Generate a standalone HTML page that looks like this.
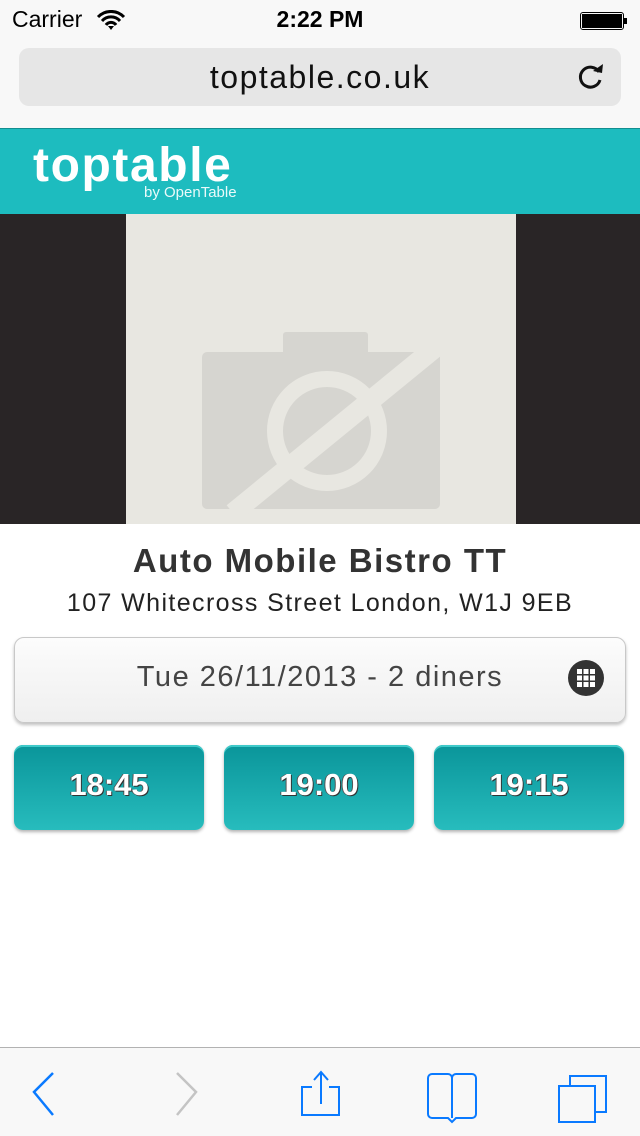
<!DOCTYPE html>
<html><head><meta charset="utf-8"><style>
*{margin:0;padding:0;box-sizing:border-box}
body{width:640px;height:1136px;position:relative;background:#fff;font-family:"Liberation Sans",Arial,sans-serif;overflow:hidden}
.a{position:absolute}
.tb{position:absolute;top:745px;width:190px;height:85px;border-radius:9px;background:linear-gradient(#0a959a,#27bcbd);box-shadow:0 2px 3px rgba(0,0,0,.3),inset 0 2px 0 #3fc9c9;color:#fff;font-weight:bold;font-size:31px;text-align:center;line-height:80px;text-shadow:1px 1px 0 #333,-1px 0 0 #555}
</style></head><body>
<div class="a" style="left:0;top:0;width:640px;height:128px;background:#f8f8f8"></div>
<div class="a" style="left:12px;top:6px;font-size:23px;color:#000">Carrier</div>
<svg class="a" style="left:96px;top:10px" width="30" height="20" viewBox="0 0 30 20"><path d="M2 7a18 18 0 0 1 26 0M6 11a12 12 0 0 1 18 0M10 15a6 6 0 0 1 10 0" stroke="#000" stroke-width="3" fill="none"/><path d="M12 16l3 4 3-4z" fill="#000"/></svg>
<div class="a" style="left:0;width:640px;top:6px;text-align:center;font-size:23px;font-weight:bold">2:22 PM</div>
<div class="a" style="left:580px;top:12px;width:50px"><div style="width:44px;height:18px;border:1.5px solid #000;border-radius:3px;padding:1px;float:left"><div style="background:#000;width:100%;height:100%"></div></div><div style="float:left;width:3px;height:6px;background:#000;margin-top:6px"></div></div>
<div class="a" style="left:19px;top:48px;width:602px;height:58px;background:#e6e6e6;border-radius:10px"></div>
<div class="a" style="left:0;width:640px;top:59px;text-align:center;font-size:32px;color:#111;letter-spacing:1.5px">toptable.co.uk</div>
<svg class="a" style="left:575px;top:60px" width="32" height="32" viewBox="0 0 32 32"><path d="M24 12A10 10 0 1 0 25 20" stroke="#111" stroke-width="3" fill="none"/><path d="M18 11l9 2 1-9z" fill="#111"/></svg>
<div class="a" style="left:0;top:128px;width:640px;height:86px;background:#1dbcbf;border-top:1px solid #128e90"></div>
<div class="a" style="left:33px;top:138px;font-size:48px;font-weight:bold;color:#fff;letter-spacing:1.6px">toptable</div>
<div class="a" style="left:144px;top:184px;font-size:15px;color:#eafafa">by OpenTable</div>
<div class="a" style="left:0;top:214px;width:640px;height:310px;background:#292526"></div>
<div class="a" style="left:126px;top:214px;width:390px;height:310px;background:#e8e7e1"></div>
<svg class="a" style="left:126px;top:214px" width="390" height="310" viewBox="126 214 390 310">
<rect x="202" y="352" width="238" height="157" rx="5" fill="#d6d5d0"/>
<rect x="283" y="332" width="85" height="24" rx="3" fill="#d6d5d0"/>
<circle cx="327" cy="431" r="52" stroke="#e8e7e1" stroke-width="16" fill="none"/>
<path d="M233 513L436 347" stroke="#e8e7e1" stroke-width="20"/>
</svg>
<div class="a" style="left:0;width:640px;top:542px;text-align:center;font-size:33px;font-weight:bold;color:#333;letter-spacing:1.5px">Auto Mobile Bistro TT</div>
<div class="a" style="left:0;width:640px;top:589px;text-align:center;font-size:25px;color:#222;letter-spacing:1.4px">107 Whitecross Street London, W1J 9EB</div>
<div class="a" style="left:14px;top:637px;width:612px;height:86px;border:1px solid #c8c8c8;border-radius:10px;background:linear-gradient(#fcfcfc,#efefef);box-shadow:0 2px 3px rgba(0,0,0,.25)"></div>
<div class="a" style="left:0;width:640px;top:661px;text-align:center;font-size:29px;color:#444;letter-spacing:1.5px">Tue 26/11/2013 - 2 diners</div>
<div class="a" style="left:568px;top:660px;width:36px;height:36px;border-radius:50%;background:#333"></div>
<svg class="a" style="left:576px;top:668px" width="20" height="20" viewBox="0 0 20 20" fill="#fff"><rect x="1" y="1" width="5" height="5"/><rect x="7.5" y="1" width="5" height="5"/><rect x="14" y="1" width="5" height="5"/><rect x="1" y="7.5" width="5" height="5"/><rect x="7.5" y="7.5" width="5" height="5"/><rect x="14" y="7.5" width="5" height="5"/><rect x="1" y="14" width="5" height="5"/><rect x="7.5" y="14" width="5" height="5"/><rect x="14" y="14" width="5" height="5"/></svg>
<div class="tb" style="left:14px">18:45</div>
<div class="tb" style="left:224px">19:00</div>
<div class="tb" style="left:434px">19:15</div>
<div class="a" style="left:0;top:1047px;width:640px;height:89px;background:#f8f8f8;border-top:1px solid #b2b2b2"></div>
<svg class="a" style="left:0;top:1048px" width="640" height="88" viewBox="0 1048 640 88" fill="none" stroke-width="2.5">
<path d="M53 1073L34 1092L53 1115" stroke="#0a7aff"/>
<path d="M177 1073L196 1092L177 1115" stroke="#c4c4c4"/>
<g stroke="#0a7aff" stroke-width="2"><path d="M312 1087H302V1115H339V1087H329M321 1104V1072M314 1080L321 1072L328 1080"/>
<path d="M452 1118V1078a4 4 0 0 0-4-4H432a4 4 0 0 0-4 4V1114a4 4 0 0 0 4 4H448L452 1122L456 1118H472a4 4 0 0 0 4-4V1078a4 4 0 0 0-4-4H456a4 4 0 0 0-4 4"/>
<rect x="559" y="1086" width="36" height="36"/><path d="M570 1086V1076H606V1112H596"/></g>
</svg>
</body></html>
